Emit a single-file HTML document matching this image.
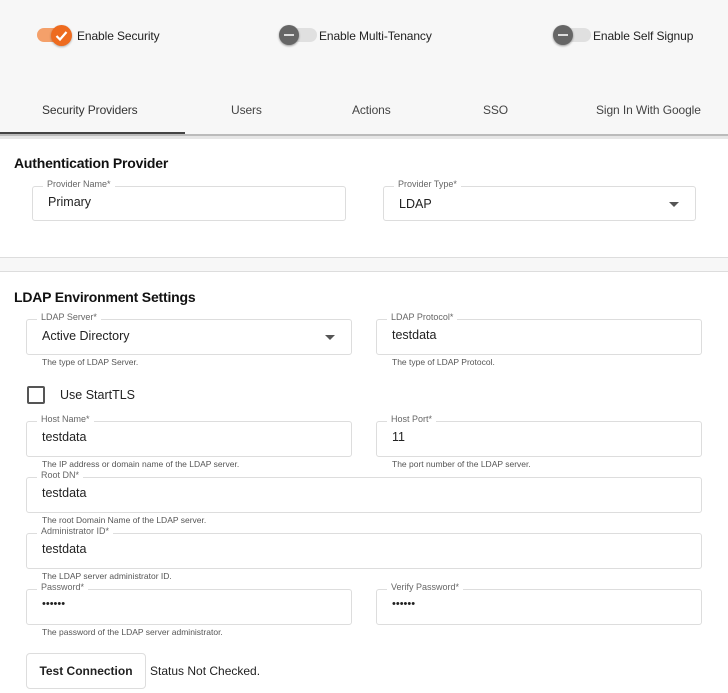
<!DOCTYPE html>
<html><head><meta charset="utf-8"><style>
*{box-sizing:border-box;margin:0;padding:0}
body{width:728px;height:693px;overflow:hidden;background:#f7f7f7;font-family:"Liberation Sans",sans-serif;color:#222;position:relative}
.a{position:absolute}
.tog{position:absolute;top:28px;width:36px;height:14px;border-radius:7px;background:#e0e0e0}
.knob{position:absolute;top:-3px;left:-2px;width:20px;height:20px;border-radius:50%;background:#666;box-shadow:0 1px 2px rgba(0,0,0,.4)}
.knob::after{content:"";position:absolute;left:5px;top:9px;width:10px;height:2px;background:#ddd}
.tl{position:absolute;top:29px;font-size:12px;color:#222;letter-spacing:-.1px}
.tab{position:absolute;top:103px;font-size:12px;color:#444;letter-spacing:-.1px}
.card{position:absolute;left:0;width:728px;background:#fff}
h2{position:absolute;font-size:14px;font-weight:bold;color:#111;letter-spacing:-.2px}
.f{position:absolute;height:36px;border:1px solid #ddd;border-radius:3px;background:#fff}
.f .l{position:absolute;top:-8px;left:10px;background:#fff;padding:0 4px;font-size:9px;color:#666}
.f .v{position:absolute;top:9px;left:15px;font-size:12.5px;color:#222}
.f .arr{position:absolute;right:16px;top:15px;width:0;height:0;border-left:5px solid transparent;border-right:5px solid transparent;border-top:5px solid #555}
.h{position:absolute;font-size:8.5px;color:#555}
</style></head><body>
<div class="a" style="left:37px;top:28px;width:34px;height:14px;border-radius:7px;background:#f4a06a"></div>
<div class="a" style="left:51px;top:25px;width:21px;height:21px;border-radius:50%;background:#ee6b1f;box-shadow:0 1px 2px rgba(0,0,0,.3)">
<svg width="21" height="21" viewBox="0 0 21 21"><path d="M5.5 11l3.5 3.5 6.5-7.5" stroke="#fff" stroke-width="2.2" fill="none"/></svg></div>
<div class="tl" style="left:77px">Enable Security</div>
<div class="tog" style="left:281px"><div class="knob"></div></div>
<div class="tl" style="left:319px">Enable Multi-Tenancy</div>
<div class="tog" style="left:555px"><div class="knob"></div></div>
<div class="tl" style="left:593px">Enable Self Signup</div>

<div class="tab" style="left:42px;color:#333">Security Providers</div>
<div class="tab" style="left:231px">Users</div>
<div class="tab" style="left:352px">Actions</div>
<div class="tab" style="left:483px">SSO</div>
<div class="tab" style="left:596px">Sign In With Google</div>
<div class="a" style="left:0;top:132px;width:185px;height:2px;background:#444"></div>
<div class="a" style="left:0;top:134px;width:728px;height:2px;background:#bbb"></div>
<div class="a" style="left:0;top:136px;width:728px;height:3px;background:#e6e6e6"></div>

<div class="card" style="top:139px;height:119px;border-bottom:1px solid #ddd">
<h2 style="left:14px;top:16px">Authentication Provider</h2>
<div class="f" style="left:32px;top:47px;width:314px;height:35px"><span class="l">Provider Name*</span><span class="v" style="top:8px">Primary</span></div>
<div class="f" style="left:383px;top:47px;width:313px;height:35px"><span class="l">Provider Type*</span><span class="v" style="top:10px">LDAP</span><span class="arr"></span></div>
</div>
<div class="card" style="top:271px;height:422px;border-top:1px solid #ddd">
<h2 style="left:14px;top:17px">LDAP Environment Settings</h2>
</div>
<div class="f" style="left:26px;top:319px;width:326px"><span class="l">LDAP Server*</span><span class="v">Active Directory</span><span class="arr"></span></div>
<div class="h" style="left:42px;top:357px">The type of LDAP Server.</div>
<div class="f" style="left:376px;top:319px;width:326px"><span class="l">LDAP Protocol*</span><span class="v" style="top:8px">testdata</span></div>
<div class="h" style="left:392px;top:357px">The type of LDAP Protocol.</div>
<div class="a" style="left:27px;top:386px;width:18px;height:18px;border:2px solid #555;border-radius:2px"></div>
<div class="a" style="left:60px;top:388px;font-size:12.5px">Use StartTLS</div>
<div class="f" style="left:26px;top:421px;width:326px"><span class="l">Host Name*</span><span class="v" style="top:8px">testdata</span></div>
<div class="h" style="left:42px;top:459px">The IP address or domain name of the LDAP server.</div>
<div class="f" style="left:376px;top:421px;width:326px"><span class="l">Host Port*</span><span class="v" style="top:8px">11</span></div>
<div class="h" style="left:392px;top:459px">The port number of the LDAP server.</div>
<div class="f" style="left:26px;top:477px;width:676px"><span class="l">Root DN*</span><span class="v" style="top:8px">testdata</span></div>
<div class="h" style="left:42px;top:515px">The root Domain Name of the LDAP server.</div>
<div class="f" style="left:26px;top:533px;width:676px"><span class="l">Administrator ID*</span><span class="v" style="top:8px">testdata</span></div>
<div class="h" style="left:42px;top:571px">The LDAP server administrator ID.</div>
<div class="f" style="left:26px;top:589px;width:326px"><span class="l">Password*</span><span class="v" style="top:8px;font-size:11px">••••••</span></div>
<div class="h" style="left:42px;top:627px">The password of the LDAP server administrator.</div>
<div class="f" style="left:376px;top:589px;width:326px"><span class="l">Verify Password*</span><span class="v" style="top:8px;font-size:11px">••••••</span></div>
<div class="a" style="left:26px;top:653px;width:120px;height:36px;border:1px solid #ddd;border-radius:4px;background:#fff;font-size:12px;font-weight:bold;text-align:center;line-height:34px;color:#222">Test Connection</div>
<div class="a" style="left:150px;top:664px;font-size:12px;color:#222">Status Not Checked.</div>
</body></html>
